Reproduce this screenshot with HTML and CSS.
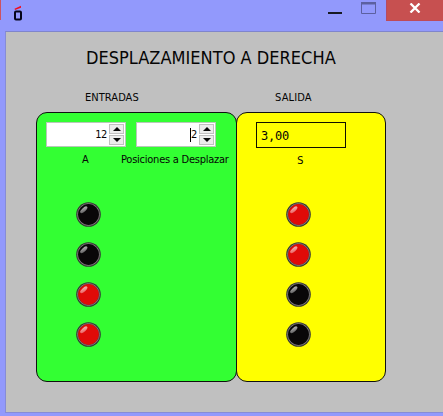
FILE: index.html
```html
<!DOCTYPE html>
<html lang="es">
<head>
<meta charset="utf-8">
<title>Desplazamiento a derecha</title>
<link rel="stylesheet" href="styles.css">
</head>
<body>
<svg width="0" height="0" class="defs">
  <defs>
    <linearGradient id="shine" x1="0" y1="1" x2="1" y2="0"><stop offset="0" stop-color="#fff" stop-opacity=".3"/><stop offset="1" stop-color="#fff" stop-opacity=".75"/></linearGradient>
    <symbol id="led" viewBox="0 0 26 26">
      <circle cx="13.5" cy="13.5" r="12.3" fill="#343434"/>
      <circle cx="13.5" cy="13.5" r="10.9" fill="none" stroke="#858080" stroke-width="1"/>
      <circle cx="13.5" cy="13.5" r="10.4" fill="currentColor"/>
      <ellipse cx="8.8" cy="8.8" rx="4.5" ry="1.9" fill="url(#shine)" transform="rotate(-42 8.8 8.8)"/>
    </symbol>
  </defs>
</svg>
<div class="window">
  <header class="titlebar">
    <span class="edge"></span>
    <svg class="logo" width="12" height="17" viewBox="0 0 12 17"><path d="M2.5 3.8 9 .8v2L3 5z" fill="#f00c20"/><rect x="3" y="6.5" width="6" height="8" rx="1" fill="none" stroke="#05051a" stroke-width="2"/></svg>
    <svg class="minmax" width="56" height="16" viewBox="0 0 56 16"><path d="M0 12h14v2H0z" fill="#171a22"/><path d="M33.5 2.5h14v11h-14z" fill="none" stroke="#5c60a0"/><path d="M33 2h15v2.5H33z" fill="#5c60a0"/></svg>
    <button class="close" aria-label="Cerrar"><svg width="12" height="10" viewBox="0 0 12 10"><path d="M1.5.5l9 9M10.5.5l-9 9" stroke="#fff" stroke-width="2.3"/></svg></button>
  </header>
  <main class="content">
    <h1>DESPLAZAMIENTO A DERECHA</h1>
    <div class="headings"><h2 class="in-title">ENTRADAS</h2><h2 class="out-title">SALIDA</h2></div>
    <div class="panels">
      <section class="panel inputs">
        <div class="fields">
          <div class="spin"><span class="value">12</span><span class="arrows"><i class="up"></i><i class="down"></i></span></div>
          <div class="spin"><span class="value focused">2</span><span class="arrows"><i class="up"></i><i class="down"></i></span></div>
        </div>
        <div class="labels"><span class="a">A</span><span class="pos">Posiciones a Desplazar</span></div>
        <div class="leds">
          <svg class="led off"><use href="#led"/></svg>
          <svg class="led off"><use href="#led"/></svg>
          <svg class="led on"><use href="#led"/></svg>
          <svg class="led on"><use href="#led"/></svg>
        </div>
      </section>
      <section class="panel output">
        <div class="result">3,00</div>
        <div class="labels"><span class="s">S</span></div>
        <div class="leds">
          <svg class="led on"><use href="#led"/></svg>
          <svg class="led on"><use href="#led"/></svg>
          <svg class="led off"><use href="#led"/></svg>
          <svg class="led off"><use href="#led"/></svg>
        </div>
      </section>
    </div>
  </main>
</div>
</body>
</html>
```
FILE: styles.css
```css
* { box-sizing: border-box; }
body { margin: 0; font: 11px/14px Tahoma, "DejaVu Sans Condensed", "DejaVu Sans", sans-serif; color: #050505; overflow: hidden; }
.defs { display: block; position: absolute; }
.window { width: 443px; height: 416px; background: #9299fc; padding: 0 0 3px 5px; }
.titlebar { height: 31px; display: flex; align-items: flex-start; margin-left: -5px; }
.edge { width: 1px; height: 20px; background: #cd5260; }
.logo { margin: 5px 0 0 11px; }
.minmax { margin-left: 304px; }
.close { margin-left: 2px; width: 57px; height: 21px; border: 0; border-left: 1px solid #b64a63; border-bottom: 1px solid #be4a58; background: #c75050; padding: 3px 0 0; display: flex; justify-content: center; align-items: flex-start; }
.content { height: 382px; background: #c0c0c0; border-left: 1px solid #868cd6; border-top: 1px solid #7f85cc; border-bottom: 1px solid #868cd6; padding-left: 30px; }
h1, h2 { margin: 0; font-weight: normal; white-space: nowrap; }
h1 { font-size: 18px; line-height: 22px; padding: 15px 0 0 50px; letter-spacing: .02px; }
.headings { display: flex; padding-top: 22px; height: 43px; }
h2 { font-size: 11px; line-height: 14px; letter-spacing: .05px; }
.in-title { width: 190px; padding-left: 49px; }
.out-title { padding-left: 49px; letter-spacing: .15px; }
.panels { display: flex; }
.panel { height: 270px; border: 1px solid #101010; border-radius: 11px; padding: 9px; }
.inputs { width: 201px; background: #33ff33; }
.output { width: 150px; margin-left: -1px; background: #ffff00; padding-left: 19px; }
.fields { display: flex; gap: 10px; }
.spin { width: 80px; height: 25px; background: #fff; border: 1px solid #b8c8b8; display: flex; justify-content: flex-end; }
.value { align-self: center; margin-right: 1px; letter-spacing: -.4px; }
.focused { border-left: 1px solid #000; }
.arrows { width: 17px; padding: 1px; display: flex; flex-direction: column; gap: 1px; }
.arrows i { height: 10px; background: #ececec; border: 1px solid #c0c0c0; display: flex; align-items: center; justify-content: center; }
.arrows i::before { content: ""; border: 4px solid transparent; }
.up::before { border-top: 0 !important; border-bottom-color: #080808 !important; }
.down::before { border-bottom: 0 !important; border-top-color: #080808 !important; }
.labels { height: 14px; margin-top: 6px; display: flex; white-space: nowrap; }
.a { flex: none; width: 75px; padding-left: 36px; }
.pos { flex: none; letter-spacing: -.24px; }
.result { width: 90px; height: 26px; border: 1px solid #101000; padding-left: 4px; font: 12px/27px "DejaVu Sans Mono", monospace; letter-spacing: -.2px; }
.output .labels { margin-top: 5px; }
.s { padding-left: 41px; font: 11px/15px "DejaVu Sans Mono", monospace; }
.leds { display: flex; flex-direction: column; gap: 14px; padding: 34px 0 0 29px; }
.led { width: 26px; height: 26px; display: block; }
.on { color: #e00a08; }
.off { color: #090708; }
```
